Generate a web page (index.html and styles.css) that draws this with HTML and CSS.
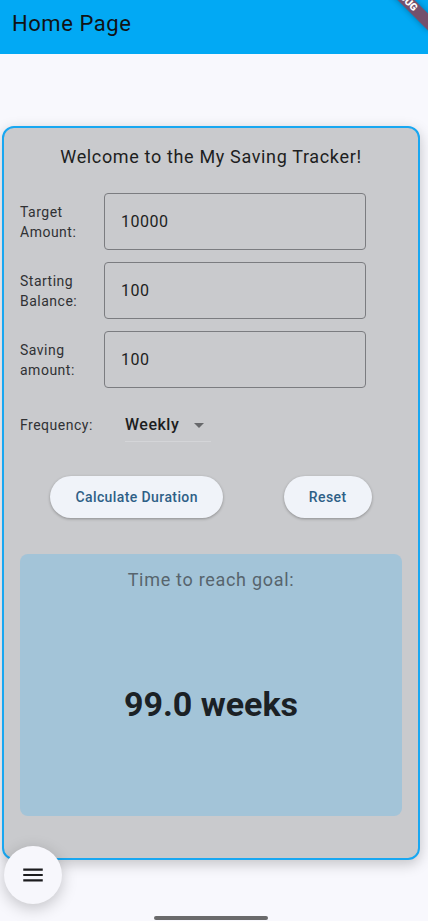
FILE: index.html
```html
<!DOCTYPE html>
<html lang="en">
<head>
<meta charset="utf-8">
<title>Home Page</title>
<link rel="stylesheet" href="styles.css">
</head>
<body>
<div class="screen">
  <header class="appbar"><h1 class="appbar-title">Home Page</h1></header>
  <main class="content">
    <section class="card">
      <h2 class="card-title">Welcome to the My Saving Tracker!</h2>
      <div class="fields">
        <div class="field">
          <label class="field-label">Target<br>Amount:</label>
          <div class="input">10000</div>
        </div>
        <div class="field">
          <label class="field-label">Starting<br>Balance:</label>
          <div class="input">100</div>
        </div>
        <div class="field">
          <label class="field-label">Saving<br>amount:</label>
          <div class="input">100</div>
        </div>
      </div>
      <div class="freq-row">
        <span class="freq-label">Frequency:</span>
        <div class="dropdown">
          <span class="dropdown-value">Weekly</span>
          <svg class="dropdown-arrow" viewBox="0 0 24 24" width="24" height="24"><path d="M7 10l5 5 5-5z" fill="#67686b"/></svg>
        </div>
      </div>
      <div class="actions">
        <button class="btn">Calculate Duration</button>
        <button class="btn">Reset</button>
      </div>
      <div class="result">
        <div class="result-title">Time to reach goal:</div>
        <div class="result-value">99.0 weeks</div>
      </div>
    </section>
  </main>
  <button class="fab" aria-label="menu">
    <svg viewBox="0 0 24 24" width="26" height="26"><path d="M3 18h18v-2H3v2zm0-5h18v-2H3v2zm0-7v2h18V6H3z" fill="#1c1c1e"/></svg>
  </button>
  <div class="home-indicator"></div>
  <div class="debug-banner">DEBUG</div>
</div>
</body>
</html>
```
FILE: styles.css
```css
* { box-sizing: border-box; }
html, body { margin: 0; padding: 0; }
body {
  font-family: Roboto, "Noto Sans", sans-serif;
  background: #f8f8fd;
  color: #1d1d20;
}
.screen {
  position: relative;
  width: 428px;
  height: 921px;
  overflow: hidden;
  background: #f8f8fd;
}
.appbar {
  height: 54px;
  background: #02a9f4;
  padding: 0 12px;
}
.appbar-title {
  margin: 0;
  font-size: 22px;
  font-weight: 400;
  letter-spacing: 0.55px;
  line-height: 48px;
  color: #111214;
}
.content {
  padding: 72px 8px 0 2px;
}
.card {
  border: 2px solid #18a7f1;
  border-radius: 12px;
  background: #c9cacd;
  padding: 17px 16px 42px;
  box-shadow: 0 4px 14px rgba(0,0,0,0.22);
}
.card-title {
  margin: 0 0 24px;
  font-size: 18px;
  font-weight: 400;
  letter-spacing: 0.65px;
  line-height: 24px;
  text-align: center;
  color: #1d1e21;
}
.fields {
  display: flex;
  flex-direction: column;
  gap: 12px;
}
.field {
  display: grid;
  grid-template-columns: 84px 262px;
  align-items: center;
}
.field-label {
  font-size: 14px;
  letter-spacing: 0.5px;
  line-height: 20px;
  color: #303134;
}
.input {
  height: 57px;
  border: 1px solid #7b7c80;
  border-radius: 4px;
  padding-left: 16px;
  display: flex;
  align-items: center;
  font-size: 16px;
  letter-spacing: 0.5px;
  color: #1d1e21;
}
.freq-row {
  margin-top: 13px;
  height: 48px;
  display: flex;
  align-items: center;
}
.freq-label {
  width: 105px;
  font-size: 14px;
  letter-spacing: 0.5px;
  color: #303134;
}
.dropdown {
  width: 86px;
  height: 33px;
  display: flex;
  align-items: center;
  justify-content: space-between;
  border-bottom: 1px solid #d4d5d8;
}
.dropdown-value {
  font-size: 16px;
  font-weight: 500;
  letter-spacing: 0.5px;
  color: #1d1e21;
}
.dropdown-arrow { display: block; }
.actions {
  margin-top: 27px;
  display: flex;
  justify-content: space-around;
}
.btn {
  height: 42px;
  padding: 0 25px;
  border: none;
  border-radius: 21px;
  background: #f0f3f9;
  color: #2e5f87;
  font-family: Roboto, sans-serif;
  font-size: 14px;
  font-weight: 500;
  letter-spacing: 0.4px;
  box-shadow: 0 1px 3px rgba(0,0,0,0.3);
}
.result {
  margin-top: 36px;
  height: 262px;
  border-radius: 8px;
  background: #a3c4d8;
  padding-top: 14px;
  display: flex;
  flex-direction: column;
}
.result-title {
  font-size: 18px;
  letter-spacing: 0.7px;
  line-height: 24px;
  text-align: center;
  color: #57646d;
}
.result-value {
  flex: 1;
  display: flex;
  align-items: center;
  justify-content: center;
  font-size: 34px;
  font-weight: 700;
  color: #1b2125;
}
.fab {
  position: absolute;
  left: 4px;
  top: 846px;
  width: 58px;
  height: 58px;
  border: none;
  border-radius: 50%;
  background: #f7f7fc;
  display: flex;
  align-items: center;
  justify-content: center;
  padding: 0;
  box-shadow: 0 4px 16px rgba(0,0,0,0.22);
}
.fab svg { display: block; }
.home-indicator {
  position: absolute;
  left: 154px;
  top: 916px;
  width: 114px;
  height: 4px;
  border-radius: 2px;
  background: #6a6a6b;
}
.debug-banner {
  position: absolute;
  left: 364px;
  top: -8px;
  width: 80px;
  height: 12px;
  transform: rotate(45deg);
  background: rgba(183, 28, 28, 0.63);
  color: #fff;
  font-size: 10.2px;
  font-weight: 900;
  line-height: 12px;
  text-align: center;
  box-shadow: 0 0 6px rgba(0,0,0,0.3);
}
```
